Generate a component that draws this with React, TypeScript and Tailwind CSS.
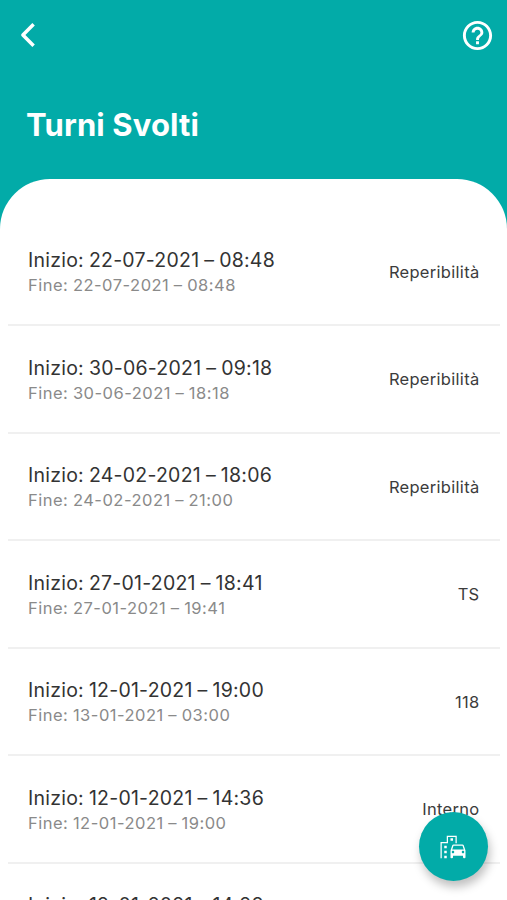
import React from 'react';
import { MdEmojiTransportation, MdHelpOutline } from 'react-icons/md';

interface Shift {
  start: string;
  end: string;
  type: string;
}

const shifts: Shift[] = [
  { start: '22-07-2021 – 08:48', end: '22-07-2021 – 08:48', type: 'Reperibilità' },
  { start: '30-06-2021 – 09:18', end: '30-06-2021 – 18:18', type: 'Reperibilità' },
  { start: '24-02-2021 – 18:06', end: '24-02-2021 – 21:00', type: 'Reperibilità' },
  { start: '27-01-2021 – 18:41', end: '27-01-2021 – 19:41', type: 'TS' },
  { start: '12-01-2021 – 19:00', end: '13-01-2021 – 03:00', type: '118' },
  { start: '12-01-2021 – 14:36', end: '12-01-2021 – 19:00', type: 'Interno' },
  { start: '12-01-2021 – 14:28', end: '12-01-2021 – 14:36', type: 'Interno' }
];

function Header() {
  return (
    <header className="h-[179px] shrink-0 text-white">
      <div className="flex h-[70px] items-center justify-between pl-[20px] pr-[12px]">
        <button aria-label="Indietro">
          <svg
            className="h-[26px] w-[16px]"
            viewBox="0 0 16 26"
            fill="none"
            stroke="currentColor"
            strokeWidth="3.5"
            strokeLinejoin="round"
          >
            <path d="M13.6 2.2L2.9 13L13.6 23.8" />
          </svg>
        </button>
        <button aria-label="Aiuto">
          <MdHelpOutline className="size-[35px]" />
        </button>
      </div>
      <h1 className="mt-[34.5px] pl-[26px] text-[31px] leading-[40px] font-bold tracking-[0.12px]">
        Turni Svolti
      </h1>
    </header>
  );
}

function ShiftRow({ shift }: { shift: Shift }) {
  return (
    <li className="mr-[7px] ml-2 flex h-[107.5px] shrink-0 items-center justify-between border-b-2 border-[#f0f0f0] pl-5 pr-[20.5px]">
      <div>
        <p className="text-[19.5px] leading-[28px] tracking-[0.24px] [word-spacing:-0.8px] text-[#333]">
          Inizio: {shift.start}
        </p>
        <p className="text-[16.5px] leading-[23px] tracking-[0.5px] [word-spacing:-0.6px] text-[#8a8a8a]">
          Fine: {shift.end}
        </p>
      </div>
      <span className="pt-px text-[16.5px] tracking-[0.3px] text-[#3c3c3c]">{shift.type}</span>
    </li>
  );
}

function App() {
  return (
    <div className="relative flex h-[900px] w-full flex-col overflow-hidden bg-[#02aba8] font-['Inter','Liberation_Sans',sans-serif]">
      <Header />
      <main className="min-h-0 flex-1 overflow-hidden rounded-t-[50px] bg-white pt-[39.9px]">
        <ul className="flex flex-col">
          {shifts.map((shift) => (
            <ShiftRow key={shift.start} shift={shift} />
          ))}
        </ul>
      </main>

      <button
        aria-label="Nuovo turno"
        className="absolute right-[19.5px] bottom-[19px] flex size-[69px] items-center justify-center rounded-full bg-[#02aba8] text-white shadow-[2px_6px_10px_rgba(0,0,0,0.25)]"
      >
        <MdEmojiTransportation className="size-[30px]" />
      </button>
    </div>
  );
}

export default App;
